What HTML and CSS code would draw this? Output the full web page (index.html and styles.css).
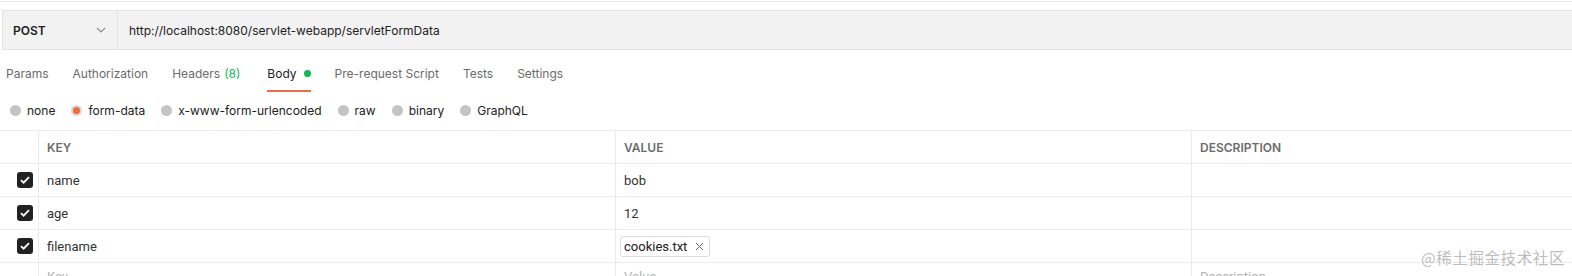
FILE: index.html
```html
<!DOCTYPE html>
<html lang="en">
<head>
    <meta charset="UTF-8">
    <title>Request</title>
    <link rel="stylesheet" href="styles.css">
</head>
<body>
    <div class="topline"></div>

    <div class="urlbar">
        <div class="method">
            <span>POST</span>
            <svg class="chevron" width="10" height="6" viewBox="0 0 10 6"><path d="M1 1l4 4 4-4" fill="none" stroke="#8a8a8a" stroke-width="1.1"/></svg>
        </div>
        <div class="url">http://localhost:8080/servlet-webapp/servletFormData</div>
    </div>

    <div class="tabs">
        <div class="tab">Params</div>
        <div class="tab">Authorization</div>
        <div class="tab headers">Headers <span class="count">(8)</span></div>
        <div class="tab active">Body <span class="dot"></span></div>
        <div class="tab">Pre-request Script</div>
        <div class="tab">Tests</div>
        <div class="tab">Settings</div>
    </div>

    <div class="bodytypes">
        <label class="radio"><span class="circle"></span>none</label>
        <label class="radio"><span class="circle on"></span>form-data</label>
        <label class="radio"><span class="circle"></span>x-www-form-urlencoded</label>
        <label class="radio"><span class="circle"></span>raw</label>
        <label class="radio"><span class="circle"></span>binary</label>
        <label class="radio"><span class="circle"></span>GraphQL</label>
    </div>

    <div class="table">
        <div class="row head">
            <div class="cell check"></div>
            <div class="cell">KEY</div>
            <div class="cell">VALUE</div>
            <div class="cell">DESCRIPTION</div>
        </div>
        <div class="row">
            <div class="cell check"><span class="box"><svg width="10" height="8" viewBox="0 0 10 8"><path d="M1 4.2l2.6 2.5L9 1.2" fill="none" stroke="#fff" stroke-width="1.8"/></svg></span></div>
            <div class="cell">name</div>
            <div class="cell">bob</div>
            <div class="cell"></div>
        </div>
        <div class="row">
            <div class="cell check"><span class="box"><svg width="10" height="8" viewBox="0 0 10 8"><path d="M1 4.2l2.6 2.5L9 1.2" fill="none" stroke="#fff" stroke-width="1.8"/></svg></span></div>
            <div class="cell">age</div>
            <div class="cell">12</div>
            <div class="cell"></div>
        </div>
        <div class="row">
            <div class="cell check"><span class="box"><svg width="10" height="8" viewBox="0 0 10 8"><path d="M1 4.2l2.6 2.5L9 1.2" fill="none" stroke="#fff" stroke-width="1.8"/></svg></span></div>
            <div class="cell">filename</div>
            <div class="cell file">
                <span class="chip">cookies.txt
                    <svg class="x" width="9" height="9" viewBox="0 0 9 9"><path d="M1 1l7 7M8 1L1 8" stroke="#6b6b6b" stroke-width="1"/></svg>
                </span>
            </div>
            <div class="cell"></div>
        </div>
        <div class="row placeholder">
            <div class="cell check"></div>
            <div class="cell">Key</div>
            <div class="cell">Value</div>
            <div class="cell">Description</div>
        </div>
    </div>

    <div class="watermark">@稀土掘金技术社区</div>
</body>
</html>
```

FILE: styles.css
```css
body {
    margin: 0;
    font-family: Inter, "Noto Sans", sans-serif;
    font-size: 12px;
    color: #212121;
    background: #fff;
    width: 1572px;
    height: 276px;
    overflow: hidden;
    position: relative;
}

.topline {
    height: 1px;
    margin-top: 1px;
    background: #e9e9e9;
}

.urlbar {
    display: flex;
    height: 38px;
    margin: 8px 0 0 2px;
    background: #f2f2f2;
    border: 1px solid #e3e3e3;
    border-right: none;
}

.method {
    width: 115px;
    display: flex;
    align-items: center;
    justify-content: space-between;
    padding: 0 11px 0 10px;
    box-sizing: border-box;
    border-right: 1px solid #e3e3e3;
    font-weight: 600;
}

.url {
    display: flex;
    align-items: center;
    padding-left: 11px;
}

.tabs {
    display: flex;
    height: 40px;
    margin-top: 6px;
    padding-left: 6px;
}

.tab {
    display: flex;
    align-items: center;
    margin-right: 24px;
    color: #6b6b6b;
    height: 36px;
    box-sizing: border-box;
    border-bottom: 2px solid transparent;
}

.tab.headers {
    margin-right: 27px;
}

.tab .count {
    color: #0cbb52;
    margin-left: 4px;
}

.tab.active {
    color: #212121;
    border-bottom-color: #f26b3a;
}

.dot {
    display: inline-block;
    width: 7px;
    height: 7px;
    border-radius: 50%;
    background: #0cbb52;
    margin-left: 7px;
}

.bodytypes {
    display: flex;
    align-items: center;
    height: 30px;
    margin-top: -1px;
    padding-left: 10px;
}

.radio {
    display: flex;
    align-items: center;
    margin-right: 16px;
    color: #212121;
}

.circle {
    width: 11px;
    height: 11px;
    border-radius: 50%;
    background: #c4c4c4;
    margin-right: 6px;
    box-sizing: border-box;
}

.circle.on {
    background: #f26b3a;
    border: 2px solid #d9d9d9;
}

.table {
    margin-top: 5px;
    border-top: 1px solid #ebebeb;
}

.row {
    display: grid;
    grid-template-columns: 38px 577px 576px 1fr;
    height: 33px;
    border-bottom: 1px solid #ebebeb;
    box-sizing: border-box;
}

.cell {
    display: flex;
    align-items: center;
    padding-left: 8px;
    border-left: 1px solid #ebebeb;
    font-family: Roboto, "Liberation Sans", sans-serif;
    font-size: 13px;
    color: #333;
}

.cell.check {
    border-left: none;
    padding-left: 17px;
}

.head .cell {
    font-family: Inter, "Noto Sans", sans-serif;
    font-size: 12px;
    font-weight: 600;
    color: #6b6b6b;
}

.box {
    width: 16px;
    height: 16px;
    border-radius: 3px;
    background: #212121;
    display: flex;
    align-items: center;
    justify-content: center;
}

.cell.file {
    padding-left: 4px;
}

.chip {
    display: flex;
    align-items: center;
    height: 19px;
    padding: 0 5px 0 3px;
    border: 1px solid #dcdcdc;
    border-radius: 3px;
    color: #212121;
}

.chip .x {
    margin-left: 8px;
}

.placeholder .cell {
    color: #b3b3b3;
    align-items: flex-start;
    padding-top: 6px;
}

.watermark {
    position: absolute;
    right: 7px;
    bottom: 8px;
    font-family: "Noto Sans CJK SC", sans-serif;
    font-size: 15.5px;
    color: rgba(160, 160, 160, 0.7);
    letter-spacing: 0.6px;
}
```
